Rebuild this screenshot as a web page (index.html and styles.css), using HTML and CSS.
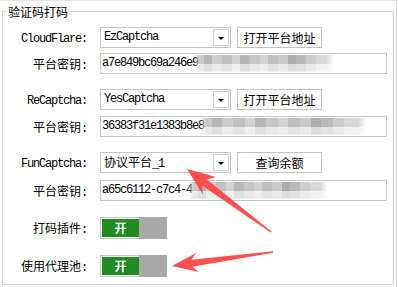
FILE: index.html
```html
<!DOCTYPE html>
<html lang="zh-CN">
<head>
<meta charset="utf-8">
<title>验证码打码</title>
<link rel="stylesheet" href="styles.css">
</head>
<body>
<div class="window">
  <fieldset class="group">
    <legend class="title">验证码打码</legend>

    <div class="row first">
      <span class="lbl latin">CloudFlare:</span>
      <div class="combo"><span class="val latin">EzCaptcha</span><span class="drop"><i class="tri"></i></span></div>
      <button class="btn">打开平台地址</button>
    </div>
    <div class="row gap5">
      <span class="lbl">平台密钥<span class="latin">:</span></span>
      <div class="input"><span class="val latin">a7e849bc69a246e9</span><span class="mosaic m1"></span></div>
    </div>

    <div class="row gap15">
      <span class="lbl latin">ReCaptcha:</span>
      <div class="combo"><span class="val latin">YesCaptcha</span><span class="drop"><i class="tri"></i></span></div>
      <button class="btn">打开平台地址</button>
    </div>
    <div class="row gap6">
      <span class="lbl">平台密钥<span class="latin">:</span></span>
      <div class="input"><span class="val latin">36383f31e1383b8e8</span><span class="mosaic m2"></span></div>
    </div>

    <div class="row gap15">
      <span class="lbl latin">FunCaptcha:</span>
      <div class="combo"><span class="val">协议平台<span class="latin">_1</span></span><span class="drop"><i class="tri"></i></span></div>
      <button class="btn">查询余额</button>
    </div>
    <div class="row gap7">
      <span class="lbl">平台密钥<span class="latin">:</span></span>
      <div class="input"><span class="val latin">a65c6112-c7c4-4</span><span class="mosaic m3"></span></div>
    </div>

    <div class="row trow gap16">
      <span class="lbl">打码插件<span class="latin">:</span></span>
      <div class="toggle"><span class="on"><b>开</b></span><span class="off"></span></div>
    </div>
    <div class="row trow gap16">
      <span class="lbl">使用代理池<span class="latin">:</span></span>
      <div class="toggle"><span class="on"><b>开</b></span><span class="off"></span></div>
    </div>
  </fieldset>

  <svg class="arrows" width="398" height="287" viewBox="0 0 398 287">
    <polygon fill="#f94f4f" points="187,169 216,177 207,179.5 271.4,231.4 270.6,232.6 202.2,185.4 202.8,194.6"/>
    <polygon fill="#f94f4f" points="172,266 196.2,253.1 191.3,259.8 272.9,251.3 273.1,252.7 192.3,266.8 198.8,271.9"/>
  </svg>
</div>
</body>
</html>
```

FILE: styles.css
```css
html, body {
  margin: 0;
  padding: 0;
  background: #ffffff;
}

.window {
  position: relative;
  width: 396px;
  height: 286px;
  border-top: 1px solid #e2e2e2;
  border-right: 1px solid #d9d9d9;
  background: #ffffff;
  font-family: "Noto Sans CJK SC", "Liberation Mono", sans-serif;
  font-size: 12px;
  color: #000000;
  overflow: hidden;
}

.group {
  box-sizing: border-box;
  margin: 2px 0 0 2px;
  padding: 0;
  width: 392px;
  height: 282px;
  min-width: 0;
  border: 1px solid #d3d3d3;
}

.title {
  margin-left: 3px;
  padding: 0 2px;
  font-size: 12px;
  line-height: 17px;
  height: 17px;
}

.latin {
  font-family: "Liberation Mono", "DejaVu Sans Mono", monospace;
  letter-spacing: -1.2px;
}

.row {
  display: flex;
  align-items: center;
  height: 21px;
}

.row.first { margin-top: 7px; }
.row.gap5 { margin-top: 5px; }
.row.gap6 { margin-top: 6px; }
.row.gap7 { margin-top: 7px; }
.row.gap15 { margin-top: 15px; }
.row.gap16 { margin-top: 16px; }
.row.trow { height: 22px; }

.lbl {
  width: 84px;
  margin-right: 13px;
  text-align: right;
  white-space: nowrap;
  line-height: 14px;
  padding-top: 2px;
}

.combo {
  box-sizing: border-box;
  width: 131px;
  height: 21px;
  border: 1px solid #c6c6c6;
  display: flex;
  align-items: center;
  padding-left: 3px;
  line-height: 17px;
}

.combo .val {
  flex: 1;
  white-space: nowrap;
}

.drop {
  box-sizing: border-box;
  width: 16px;
  height: 17px;
  margin-right: 1px;
  border: 1px solid #cfcfcf;
  display: flex;
  align-items: center;
  justify-content: center;
  padding-top: 2px;
}

.tri {
  width: 0;
  height: 0;
  border-left: 3px solid transparent;
  border-right: 3px solid transparent;
  border-top: 3px solid #000000;
}

.btn {
  box-sizing: border-box;
  margin: 0 0 0 6px;
  padding: 0;
  width: 85px;
  height: 21px;
  border: 1px solid #c3c3c3;
  background: #ffffff;
  font-family: "Noto Sans CJK SC", sans-serif;
  font-size: 12px;
  line-height: 14px;
  color: #000000;
}

.input {
  box-sizing: border-box;
  width: 287px;
  height: 21px;
  border: 1px solid #c6c6c6;
  display: flex;
  align-items: center;
  padding-left: 1px;
  overflow: hidden;
  line-height: 17px;
}

.input .val {
  white-space: nowrap;
}

.mosaic {
  display: block;
  height: 17px;
  margin-left: -4px;
  background-image:
    linear-gradient(to right, #c9c9c9 0 7%, #b5b5b5 7% 13%, #cdcdcd 13% 20%, #c0c0c0 20% 27%, #d3d3d3 27% 33%, #b7b7b7 33% 40%, #c7c7c7 40% 47%, #d2d2d2 47% 53%, #bebebe 53% 60%, #cbcbcb 60% 67%, #adadad 67% 73%, #b9b9b9 73% 80%, #cccccc 80% 87%, #d8d8d8 87% 100%),
    linear-gradient(to right, #e9e9e9 0 7%, #dedede 7% 13%, #ececec 13% 20%, #e4e4e4 20% 27%, #efefef 27% 33%, #e0e0e0 33% 40%, #e8e8e8 40% 47%, #eeeeee 47% 53%, #e3e3e3 53% 60%, #eaeaea 60% 67%, #dcdcdc 67% 73%, #e2e2e2 73% 80%, #ebebeb 80% 87%, #f2f2f2 87% 100%);
  background-size: 100% 55%, 100% 45%;
  background-position: top left, bottom left;
  background-repeat: no-repeat;
  -webkit-mask-image: linear-gradient(to right, transparent 0, #000 6px, #000 calc(100% - 8px), transparent 100%);
  mask-image: linear-gradient(to right, transparent 0, #000 6px, #000 calc(100% - 8px), transparent 100%);
  filter: blur(0.5px);
}

.mosaic.m1 { width: 140px; }
.mosaic.m2 { width: 166px; }
.mosaic.m3 { width: 140px; }

.toggle {
  display: flex;
  height: 22px;
}

.toggle .on {
  box-sizing: border-box;
  width: 39px;
  height: 22px;
  border: 1px solid #c8c8c8;
  border-right: 0;
  padding: 1px 0 1px 1px;
}

.toggle .on b {
  display: flex;
  height: 100%;
  align-items: center;
  justify-content: center;
  background: #228b22;
  color: #ffffff;
  font-weight: bold;
  font-size: 12px;
  line-height: 14px;
}

.toggle .off {
  width: 28px;
  height: 22px;
  background: #a9a9a9;
}

.arrows {
  position: absolute;
  top: -1px;
  left: 0;
  pointer-events: none;
}
```
